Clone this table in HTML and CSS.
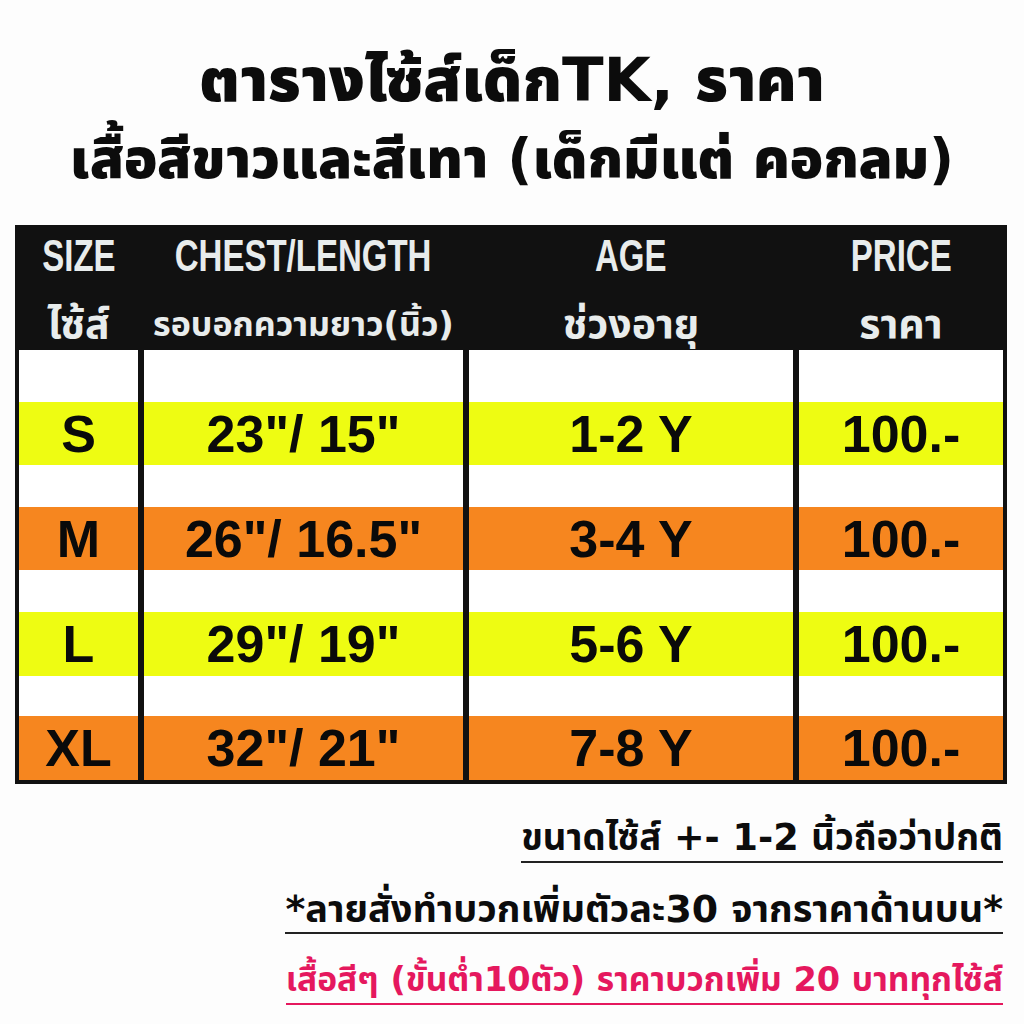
FILE: index.html
```html
<!DOCTYPE html>
<html lang="th">
<head>
<meta charset="utf-8">
<title>ตารางไซ้ส์เด็กTK</title>
<link rel="stylesheet" href="styles.css">
</head>
<body>
<div class="page">
  <header class="titles">
    <h1 class="title-main">ตารางไซ้ส์เด็กTK, ราคา</h1>
    <h2 class="title-sub">เสื้อสีขาวและสีเทา (เด็กมีแต่ คอกลม)</h2>
  </header>

  <section class="table">
    <div class="row head">
      <div class="hcell"><span class="en">SIZE</span><span class="th">ไซ้ส์</span></div>
      <div class="hcell"><span class="en">CHEST/LENGTH</span><span class="th small">รอบอกความยาว(นิ้ว)</span></div>
      <div class="hcell"><span class="en">AGE</span><span class="th">ช่วงอายุ</span></div>
      <div class="hcell"><span class="en">PRICE</span><span class="th">ราคา</span></div>
    </div>

    <div class="row gap first"><div></div><div></div><div></div><div></div></div>
    <div class="row data yellow"><div>S</div><div>23"/ 15"</div><div>1-2 Y</div><div>100.-</div></div>
    <div class="row gap"><div></div><div></div><div></div><div></div></div>
    <div class="row data orange"><div>M</div><div>26"/ 16.5"</div><div>3-4 Y</div><div>100.-</div></div>
    <div class="row gap"><div></div><div></div><div></div><div></div></div>
    <div class="row data yellow tall"><div>L</div><div>29"/ 19"</div><div>5-6 Y</div><div>100.-</div></div>
    <div class="row gap short"><div></div><div></div><div></div><div></div></div>
    <div class="row data orange tall"><div>XL</div><div>32"/ 21"</div><div>7-8 Y</div><div>100.-</div></div>
  </section>

  <section class="notes">
    <p class="note n1">ขนาดไซ้ส์ +- 1-2 นิ้วถือว่าปกติ</p>
    <p class="note n2">*ลายสั่งทำบวกเพิ่มตัวละ30 จากราคาด้านบน*</p>
    <p class="note n3 pink">เสื้อสีๆ (ขั้นต่ำ10ตัว) ราคาบวกเพิ่ม 20 บาททุกไซ้ส์</p>
  </section>
</div>
</body>
</html>
```

FILE: styles.css
```css
html, body {
  margin: 0;
  padding: 0;
  background: #fdfdfd;
}

body {
  width: 1024px;
  height: 1024px;
  overflow: hidden;
  font-family: "DejaVu Sans", "Noto Sans Thai", "Noto Sans", sans-serif;
  color: #0c0c0c;
}

.page {
  display: flex;
  flex-direction: column;
}

.titles {
  display: flex;
  flex-direction: column;
  align-items: center;
  padding-top: 44px;
  height: 225px;
  box-sizing: border-box;
}

.title-main {
  margin: 0;
  font-size: 61px;
  line-height: 72px;
  font-weight: 900;
  white-space: nowrap;
}

.title-sub {
  margin: 11px 0 0;
  font-size: 55px;
  line-height: 64px;
  font-weight: 900;
  white-space: nowrap;
}

.table {
  margin-left: 15px;
  width: 992px;
  box-sizing: border-box;
  border: 4px solid #111;
  background: #111;
  display: flex;
  flex-direction: column;
}

.row {
  display: grid;
  grid-template-columns: 119px 319px 324px 204px;
  column-gap: 6px;
}

.head {
  height: 121px;
  background: #111;
}

.hcell {
  display: flex;
  flex-direction: column;
  align-items: center;
  color: #e8ecec;
  font-weight: 700;
  white-space: nowrap;
}

.hcell .en {
  display: inline-block;
  font-family: "Liberation Sans", sans-serif;
  font-size: 44px;
  line-height: 46px;
  margin-top: 4px;
  transform: scaleX(0.75);
}

.hcell .th {
  font-size: 41px;
  line-height: 50px;
  margin-top: 20px;
}

.hcell .th.small {
  font-size: 34px;
}

.gap {
  height: 42px;
}

.gap.first {
  height: 52px;
}

.gap.short {
  height: 40px;
}

.gap > div {
  background: #ffffff;
}

.data {
  height: 63px;
}

.data.tall {
  height: 64px;
}

.data > div {
  display: flex;
  align-items: center;
  justify-content: center;
  font-family: "Liberation Sans", "DejaVu Sans", sans-serif;
  font-size: 52px;
  font-weight: 700;
  color: #0a0a0a;
  white-space: nowrap;
}

.yellow > div {
  background: #eefc12;
}

.orange > div {
  background: #f6861f;
}

.notes {
  display: flex;
  flex-direction: column;
  align-items: flex-end;
  padding-right: 21px;
  padding-top: 31px;
  gap: 23px;
}

.note {
  margin: 0;
  line-height: 46px;
  font-weight: 700;
  border-bottom: 2px solid #222;
  white-space: nowrap;
}

.n1 {
  font-size: 36.6px;
}

.n2 {
  font-size: 37.9px;
}

.n3 {
  font-size: 33.6px;
}

.note.pink {
  color: #e5185e;
  border-bottom-color: #e5185e;
}
```
